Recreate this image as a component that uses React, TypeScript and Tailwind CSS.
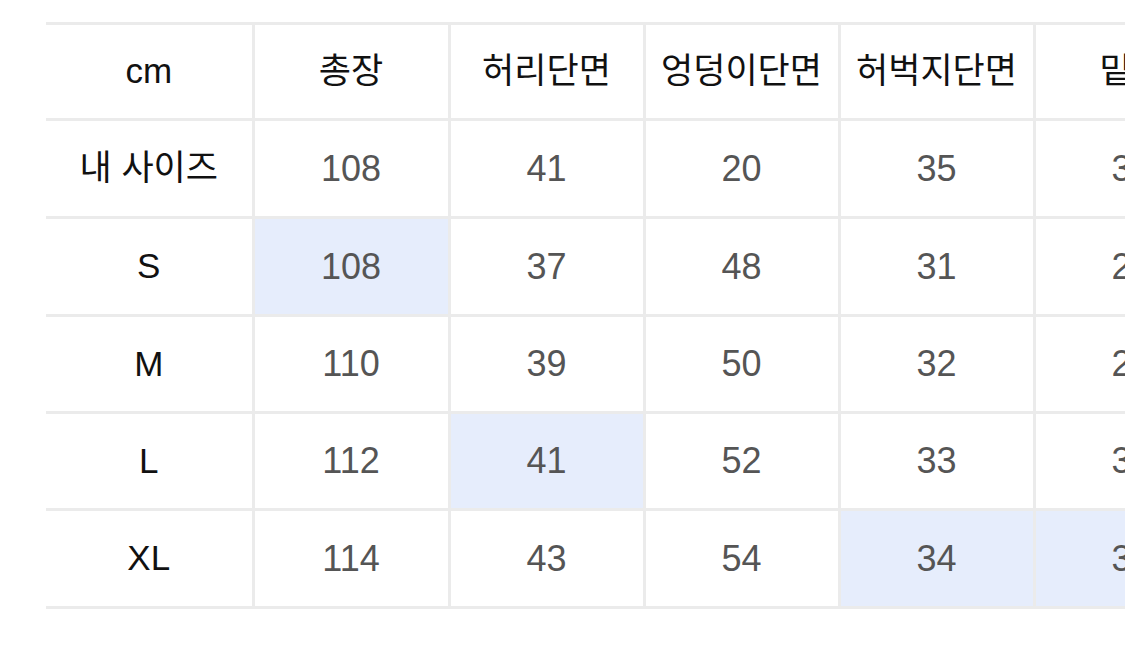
import React from "react"

const headers = ["cm", "총장", "허리단면", "엉덩이단면", "허벅지단면", "밑위"]

const rows: { label: string; values: string[]; hi: number[]; h: string }[] = [
  { label: "내 사이즈", values: ["108", "41", "20", "35", "30"], hi: [], h: "h-[98px]" },
  { label: "S", values: ["108", "37", "48", "31", "27"], hi: [0], h: "h-[98px]" },
  { label: "M", values: ["110", "39", "50", "32", "28"], hi: [], h: "h-[97px]" },
  { label: "L", values: ["112", "41", "52", "33", "30"], hi: [1], h: "h-[97px]" },
  { label: "XL", values: ["114", "43", "54", "34", "31"], hi: [3, 4], h: "h-[98px]" },
]

export default function App() {
  return (
    <div
      className="w-[1125px] h-[656px] overflow-hidden bg-white pt-[22px] pl-[46px]"
      style={{ fontFamily: '"Liberation Sans", "Noto Sans CJK KR", sans-serif' }}
    >
      <table className="border-collapse table-fixed w-[1183px]">
        <colgroup>
          <col className="w-[207px]" />
          <col className="w-[196px]" />
          <col className="w-[195px]" />
          <col className="w-[195px]" />
          <col className="w-[195px]" />
          <col className="w-[195px]" />
        </colgroup>
        <thead>
          <tr className="h-[96px]">
            {headers.map((h, i) => (
              <th
                key={h}
                className={
                  "border-[3px] border-[#ebebeb] text-[35px] font-normal text-[#111111] text-center whitespace-nowrap " +
                  (i === 0 ? "border-l-0" : "")
                }
              >
                {h}
              </th>
            ))}
          </tr>
        </thead>
        <tbody>
          {rows.map((row) => (
            <tr key={row.label} className={row.h}>
              <td className="border-[3px] border-l-0 border-[#ebebeb] text-[35px] text-[#111111] text-center whitespace-nowrap">
                {row.label}
              </td>
              {row.values.map((v, i) => (
                <td
                  key={i}
                  className={
                    "border-[3px] border-[#ebebeb] text-[36px] text-[#555555] text-center " +
                    (row.hi.includes(i) ? "bg-[#e6edfc]" : "bg-white")
                  }
                >
                  {v}
                </td>
              ))}
            </tr>
          ))}
        </tbody>
      </table>
    </div>
  )
}
